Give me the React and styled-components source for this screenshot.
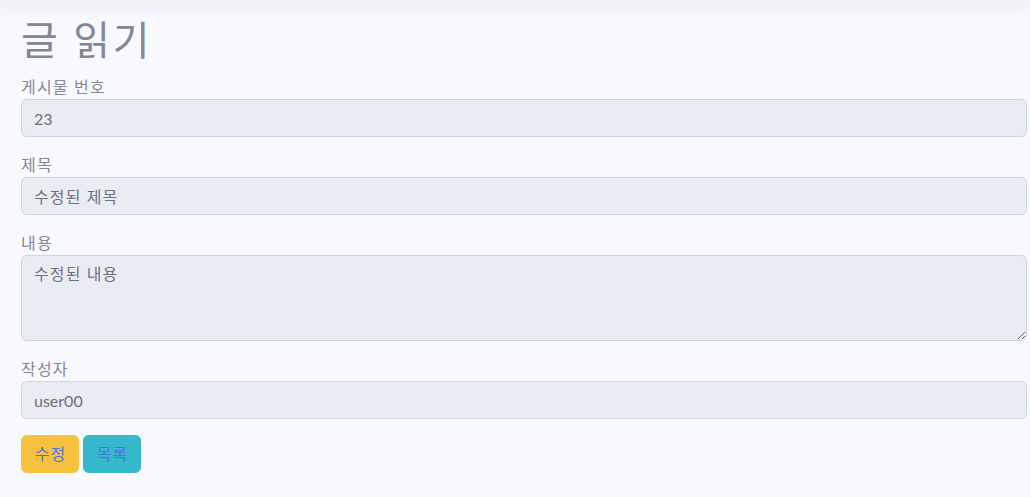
import React from "react";
import styled, { createGlobalStyle } from "styled-components";

const Global = createGlobalStyle`
  html, body { margin: 0; padding: 0; }
  body {
    background: #f8f9fc;
    color: #858796;
    font-family: "Lato", "Noto Sans CJK KR", sans-serif;
    font-size: 16px;
    line-height: 1.5;
    overflow: hidden;
  }
  * { box-sizing: border-box; }
`;

const Topbar = styled.div`
  height: 0;
  box-shadow: 0 0 18px 4px rgba(58, 59, 69, 0.12);
`;

const Page = styled.main`
  padding: 16px 3px 24px 21px;
`;

const Title = styled.h1`
  margin: 0 0 11px;
  font-size: 40px;
  font-weight: 400;
  line-height: 1.2;
  letter-spacing: 2.6px;
  color: #858796;
`;

const Group = styled.div`
  margin-bottom: 16px;
`;

const Label = styled.label`
  display: block;
  margin: 0;
  color: #858796;
  font-size: 16px;
  line-height: 24px;
  letter-spacing: 1.2px;
`;

const fieldBase = `
  display: block;
  width: 100%;
  padding: 6px 12px;
  font: inherit;
  font-size: 16px;
  color: #6e707e;
  background: #eaecf4;
  border: 1px solid #d1d3e2;
  border-radius: 5.6px;
  outline: none;
`;

const Field = styled.input`
  ${fieldBase}
  height: 38px;
  letter-spacing: ${(p) => (p.$latin ? "0" : "1.1px")};
`;

const Area = styled.textarea`
  ${fieldBase}
  height: 86px;
  line-height: 1.5;
  letter-spacing: 1.1px;
  resize: vertical;
`;

const Actions = styled.div`
  display: flex;
  gap: 4px;
`;

const Button = styled.button`
  width: 58px;
  height: 38px;
  padding: 6px 0;
  font: inherit;
  font-size: 16px;
  letter-spacing: 1px;
  text-indent: 1px;
  color: #4e73df;
  background: ${(p) => (p.$variant === "info" ? "#36b9cc" : "#f6c23e")};
  border: 1px solid ${(p) => (p.$variant === "info" ? "#36b9cc" : "#f6c23e")};
  border-radius: 5.6px;
  cursor: pointer;
`;

export default function App() {
  return (
    <>
      <Global />
      <Topbar />
      <Page>
        <Title>글 읽기</Title>
        <Group>
          <Label>게시물 번호</Label>
          <Field readOnly $latin value="23" />
        </Group>
        <Group>
          <Label>제목</Label>
          <Field readOnly value="수정된 제목" />
        </Group>
        <Group>
          <Label>내용</Label>
          <Area readOnly value="수정된 내용" />
        </Group>
        <Group>
          <Label>작성자</Label>
          <Field readOnly $latin value="user00" />
        </Group>
        <Actions>
          <Button>수정</Button>
          <Button $variant="info">목록</Button>
        </Actions>
      </Page>
    </>
  );
}
